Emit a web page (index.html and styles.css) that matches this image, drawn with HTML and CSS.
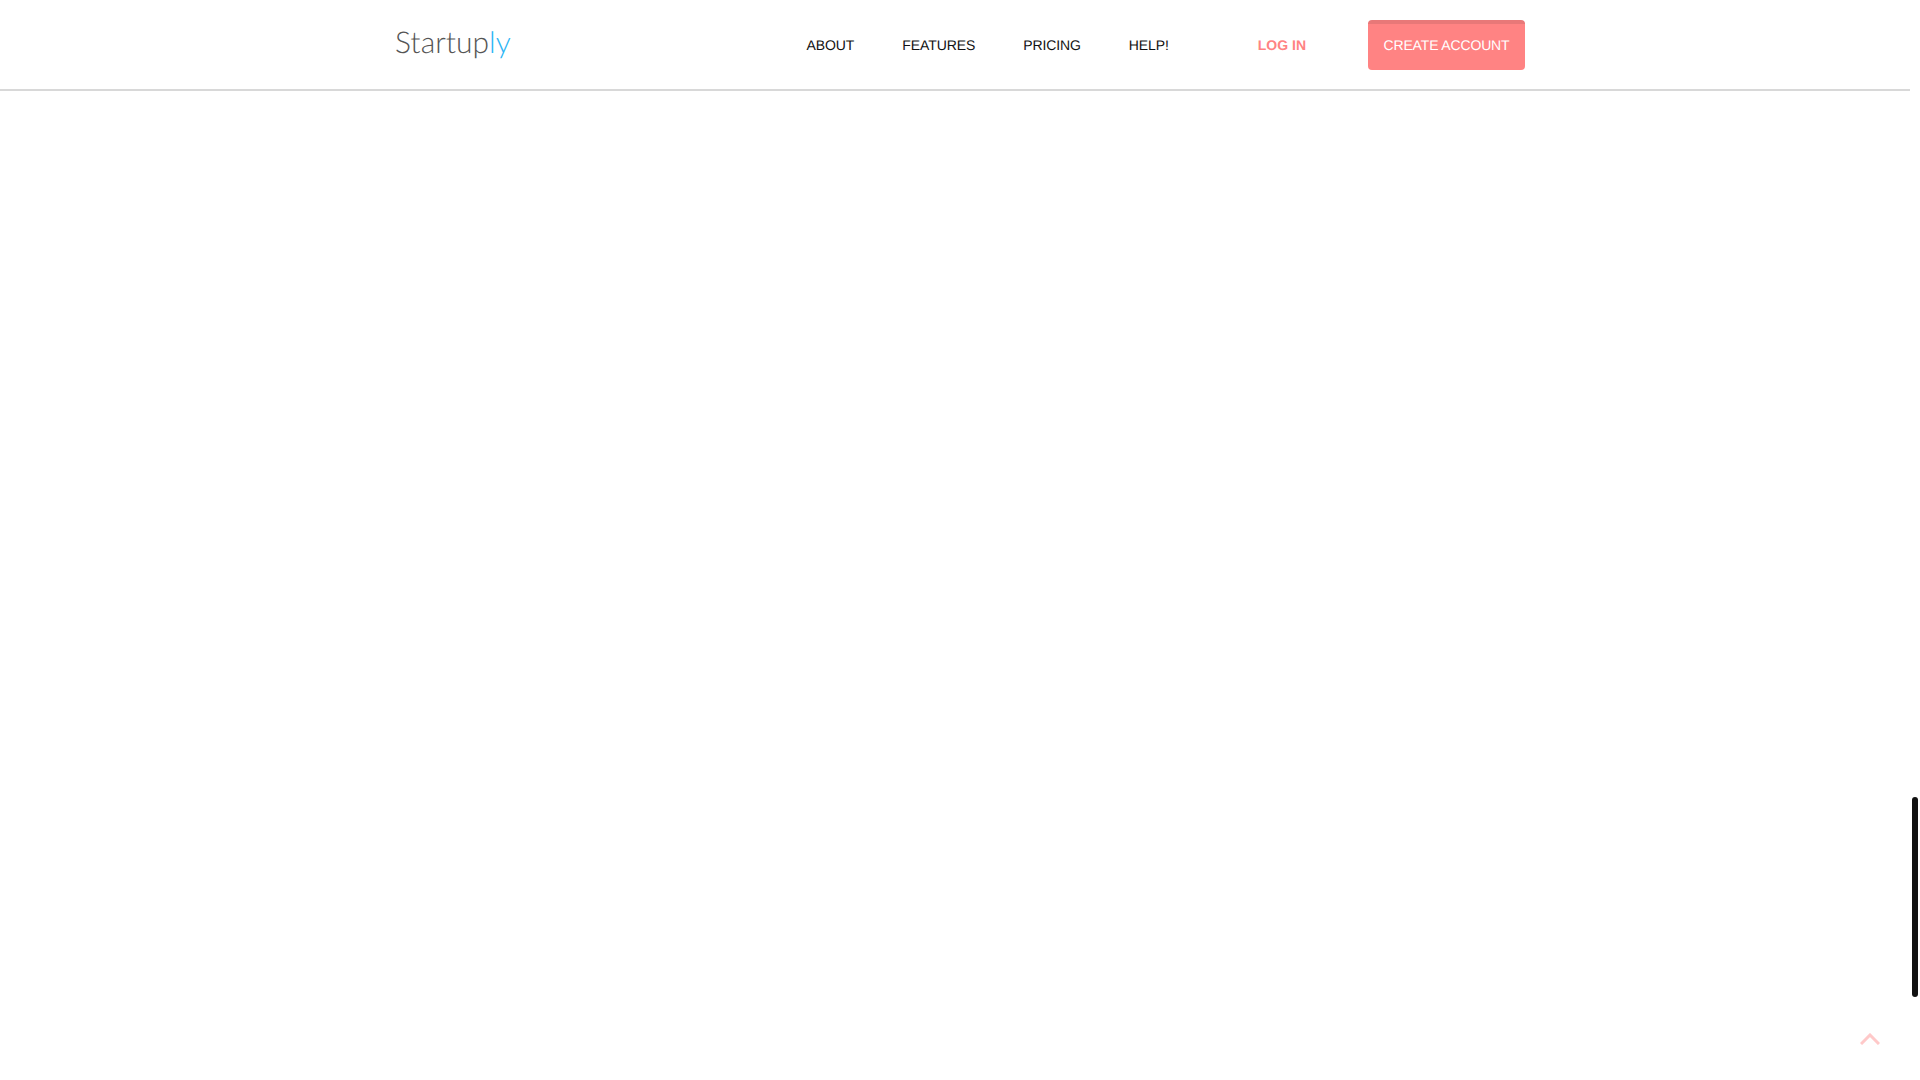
FILE: index.html
```html
<!DOCTYPE html>
<html lang="en">
<head>
<meta charset="utf-8">
<title>Startuply</title>
<link rel="stylesheet" href="styles.css">
</head>
<body>
<div class="page">
  <header class="header">
    <div class="container">
      <a class="logo" href="#">Startup<span class="logo-accent">ly</span></a>
      <nav class="nav">
        <a class="nav-link" href="#">About</a>
        <a class="nav-link" href="#">Features</a>
        <a class="nav-link" href="#">Pricing</a>
        <a class="nav-link" href="#">Help!</a>
        <a class="nav-link login" href="#">Log in</a>
        <a class="create" href="#">Create account</a>
      </nav>
    </div>
  </header>
  <a class="back-top" href="#" aria-label="Back to top">
    <svg class="chevron" width="20" height="12" viewBox="0 0 20 12"><path d="M1 11 L10 2 L19 11" fill="none" stroke="#ffc9c9" stroke-width="3"/></svg>
  </a>
  <div class="scroll-thumb"></div>
</div>
</body>
</html>
```
FILE: styles.css
```css
* { box-sizing: border-box; }
html, body { margin: 0; height: 100%; overflow: hidden; background: #fff; }
body { font-family: "Liberation Sans", Arial, sans-serif; text-rendering: geometricPrecision; }
.page { position: relative; width: 1920px; height: 1080px; }
.header { width: 1910px; height: 91px; border-bottom: 2px solid #d8d8d8; }
.container { display: flex; align-items: center; justify-content: space-between; height: 89px; padding: 0 385px 0 395px; }
.logo { font-family: Lato, sans-serif; font-weight: 300; font-size: 30px; color: #555; text-decoration: none; position: relative; top: -3px; }
.logo-accent { color: #2bb5f5; }
.nav { display: flex; align-items: center; }
.nav-link { font-size: 14px; line-height: 20px; letter-spacing: -0.1px; color: #111; text-decoration: none; text-transform: uppercase; margin-right: 48px; }
.login { margin-left: 41px; margin-right: 62px; letter-spacing: 0; color: #ff8383; font-weight: 700; }
.create { display: block; width: 157px; height: 50px; border-top: 4px solid #e87878; border-radius: 4px; background: #ff8383; color: #fff; font-size: 14px; letter-spacing: -0.15px; line-height: 42px; text-align: center; text-transform: uppercase; text-decoration: none; }
.back-top { position: absolute; left: 1860px; top: 1033px; display: block; line-height: 0; }
.scroll-thumb { position: absolute; left: 1912px; top: 797px; width: 6px; height: 200px; border-radius: 3px; background: #111; }
```
